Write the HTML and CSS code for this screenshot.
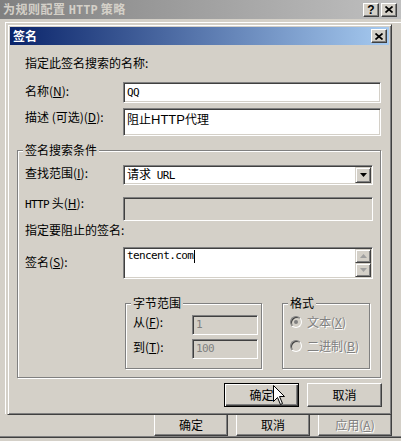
FILE: index.html
```html
<!DOCTYPE html>
<html>
<head>
<meta charset="utf-8">
<link rel="stylesheet" href="styles.css">
</head>
<body>
<div class="back">
  <div class="back-title">
    <span class="back-title-text">为规则配置 <span class="mono">HTTP</span> 策略</span>
    <div class="caption-btns">
      <span class="cap-btn help">?</span>
      <span class="cap-btn"><svg width="8" height="7" viewBox="0 0 8 7"><path d="M0.5 0.5 L7.5 6.5 M7.5 0.5 L0.5 6.5" stroke="#000" stroke-width="1.7"/></svg></span>
    </div>
  </div>
  <div class="back-panel"></div>
  <div class="back-buttons">
    <div class="btn small">确定</div>
    <div class="btn small">取消</div>
    <div class="btn small disabled">应用(<u>A</u>)</div>
  </div>
  <div class="back-edge"></div>
</div>

<div class="dlg">
  <div class="dlg-title">
    <span>签名</span>
    <span class="cap-btn"><svg width="8" height="7" viewBox="0 0 8 7"><path d="M0.5 0.5 L7.5 6.5 M7.5 0.5 L0.5 6.5" stroke="#000" stroke-width="1.7"/></svg></span>
  </div>
  <div class="dlg-body">
    <div class="heading">指定此签名搜索的名称:</div>
    <div class="row row-name">
      <div class="lbl">名称(<u>N</u>):</div>
      <div class="inp field h21"><span class="mono">QQ</span></div>
    </div>
    <div class="row row-desc">
      <div class="lbl">描述 (可选)(<u>D</u>):</div>
      <div class="inp field h28 top"><span class="prop">阻止<span class="latin">HTTP</span>代理</span></div>
    </div>

    <fieldset class="group main-group">
      <legend>签名搜索条件</legend>
      <div class="grow row-find">
        <div class="lbl l1">查找范围(<u>I</u>):</div>
        <div class="inp field h20 select">
          <span class="sel-text">请求 <span class="mono gap">URL</span></span>
          <span class="drop-btn"><svg width="7" height="4" viewBox="0 0 7 4"><path d="M0 0 H7 L3.5 4 Z" fill="#000"/></svg></span>
        </div>
      </div>
      <div class="grow row-http">
        <div class="lbl lm1"><span class="mono">HTTP</span> 头(<u>H</u>):</div>
        <div class="inp field h24 disabled"></div>
      </div>
      <div class="sub-heading">指定要阻止的签名:</div>
      <div class="grow row-sig">
        <div class="lbl l8">签名(<u>S</u>):</div>
        <div class="inp field h32 textarea">
          <span class="sig-text"><span class="mono">tencent.com</span><span class="caret"></span></span>
          <span class="scroll">
            <span class="sbtn"><svg width="7" height="4" viewBox="0 0 7 4"><path d="M0 4 H7 L3.5 0 Z" fill="#a0a0a0"/></svg></span>
            <span class="sbtn"><svg width="7" height="4" viewBox="0 0 7 4"><path d="M0 0 H7 L3.5 4 Z" fill="#a0a0a0"/></svg></span>
          </span>
        </div>
      </div>

      <div class="sub-groups">
        <fieldset class="group range">
          <legend>字节范围</legend>
          <div class="rrow r1">
            <div class="rlbl">从(<u>F</u>):</div>
            <div class="inp disabled rinp"><span class="mono">1</span></div>
          </div>
          <div class="rrow r2">
            <div class="rlbl">到(<u>T</u>):</div>
            <div class="inp disabled rinp"><span class="mono">100</span></div>
          </div>
        </fieldset>
        <fieldset class="group fmt">
          <legend>格式</legend>
          <div class="radio-row rr1"><span class="radio checked"></span><span class="dis-text">文本(<u>X</u>)</span></div>
          <div class="radio-row rr2"><span class="radio"></span><span class="dis-text">二进制(<u>B</u>)</span></div>
        </fieldset>
      </div>
    </fieldset>

    <div class="dlg-buttons">
      <div class="btn default">确定</div>
      <div class="btn">取消</div>
    </div>
  </div>
</div>

<svg class="cursor" width="13" height="21" viewBox="0 0 13 21"><path d="M0.5 0.5 V16.5 L4.5 12.5 L7.5 19.5 L9.5 18.5 L6.5 11.5 H11.5 Z" fill="#fff" stroke="#000" stroke-width="1"/></svg>
</body>
</html>
```

FILE: styles.css
```css
* { box-sizing: border-box; margin: 0; padding: 0; }
html, body { width: 401px; height: 441px; overflow: hidden; }
body {
  background: #d4d0c8;
  font-family: "Noto Sans CJK SC", "Liberation Sans", sans-serif;
  font-size: 12px;
  line-height: 14px;
  color: #000;
  position: relative;
}
u { text-decoration: underline; text-underline-offset: 1px; }
.mono { font-family: "DejaVu Sans Mono", monospace; font-size: 11px; letter-spacing: -0.6px; }
.mono.gap { margin-left: 3px; }
.latin { font-family: "Liberation Sans", sans-serif; font-size: 13px; }

/* back window */
.back { display: flex; flex-direction: column; height: 441px; }
.back-title {
  height: 19px;
  background: linear-gradient(to right, #808080, #c0c0c0);
  display: flex; align-items: center; justify-content: space-between;
  padding: 0 4px 0 3px;
}
.back-title-text { color: #d4d0c8; font-weight: bold; letter-spacing: 0.5px; white-space: pre; }
.back-title-text .mono { font-size: 12px; letter-spacing: 0; }
.caption-btns { display: flex; gap: 2px; }
.cap-btn {
  width: 16px; height: 14px;
  display: flex; align-items: center; justify-content: center;
  background: #d4d0c8;
  border: 1px solid; border-color: #fff #404040 #404040 #fff;
  box-shadow: inset -1px -1px #808080;
}
.cap-btn.help { font-family: "Liberation Sans", sans-serif; font-weight: bold; font-size: 12px; line-height: 12px; color: #000; }
.back-panel { flex: 1; margin: 3px 0 0 5px; border-left: 1px solid #fff; border-top: 1px solid #fff; }
.back-buttons { display: flex; justify-content: flex-end; gap: 8px; padding-right: 9px; height: 22px; }
.back-edge { height: 5px; border-top: 1px solid #808080; box-shadow: inset 0 1px #404040; }

/* buttons */
.btn {
  display: flex; align-items: center; justify-content: center;
  width: 75px; height: 24px;
  background: #d4d0c8;
  border: 1px solid; border-color: #fff #404040 #404040 #fff;
  box-shadow: inset -1px -1px #808080, inset 1px 1px #d4d0c8;
}
.btn.small { width: 74px; height: 22px; }
.btn.default {
  border-color: #000;
  box-shadow: inset 1px 1px #fff, inset -1px -1px #404040, inset -2px -2px #808080;
}
.btn.disabled, .dis-text { color: #808080; text-shadow: 1px 1px #fff; }

/* front dialog */
.dlg {
  position: absolute; left: 7px; top: 24px;
  width: 385px; height: 391px;
  background: #d4d0c8;
  border: 1px solid; border-color: #d4d0c8 #404040 #404040 #d4d0c8;
  box-shadow: inset 1px 1px #fff, inset -1px -1px #808080;
  padding: 2px;
}
.dlg-title {
  height: 18px;
  background: linear-gradient(to right, #0a246a, #a6caf0);
  display: flex; align-items: center; justify-content: space-between;
  padding: 0 2px 0 3px;
  color: #fff; font-weight: bold;
}
.dlg-body { padding: 0 8px 0 7px; }
.heading { margin-top: 11px; padding-left: 8px; }
.row { display: flex; align-items: flex-start; padding-left: 8px; }
.grow { display: flex; align-items: flex-start; }
.lbl { width: 98px; flex: none; margin-top: 2px; white-space: pre; }
.field { flex: 1; }
.row-name { margin-top: 12px; }
.row-desc { margin-top: 5px; }

.inp {
  background: #fff;
  border: 1px solid; border-color: #808080 #fff #fff #808080;
  box-shadow: inset 1px 1px #404040, inset -1px -1px #d4d0c8;
  padding: 0 3px;
  display: flex; align-items: center;
  position: relative;
}
.inp.top { align-items: flex-start; padding-top: 3px; }
.inp.disabled { background: #d4d0c8; color: #808080; }
.h20 { height: 20px; }
.h21 { height: 21px; }
.h24 { height: 24px; }
.h28 { height: 28px; }
.h32 { height: 32px; }

/* group boxes */
.group {
  border: 1px solid #808080;
  box-shadow: inset 1px 1px #fff, 1px 1px #fff;
}
.group legend { background: #d4d0c8; padding: 0 2px; margin-left: -2px; line-height: 14px; }
.main-group { margin-top: 7px; padding: 0 7px 8px 7px; }
.row-find { margin-top: 8px; }
.l1 { margin-top: 1px; }
.row-http { margin-top: 12px; }
.lm1 { margin-top: -1px; }
.sub-heading { margin-top: 2px; }
.row-sig { margin-top: 10px; }
.l8 { margin-top: 8px; }

.select { justify-content: space-between; padding-right: 1px; }
.drop-btn, .sbtn {
  width: 16px;
  display: flex; align-items: center; justify-content: center;
  background: #d4d0c8;
  border: 1px solid; border-color: #d4d0c8 #404040 #404040 #d4d0c8;
  box-shadow: inset 1px 1px #fff, inset -1px -1px #808080;
}
.drop-btn { height: 16px; }
.textarea { align-items: flex-start; justify-content: space-between; padding: 1px 1px 0 3px; }
.sig-text { display: flex; align-items: center; }
.caret { width: 1px; height: 13px; background: #000; margin-left: 1px; }
.scroll { display: flex; flex-direction: column; }
.sbtn { height: 14px; }

.sub-groups { display: flex; gap: 20px; margin-top: 17px; padding-left: 100px; }
.range { width: 137px; height: 73px; padding: 0 3px 0 7px; }
.fmt { width: 88px; height: 73px; padding: 0 3px 0 7px; }
.rrow { display: flex; align-items: flex-start; }
.r1 { margin-top: 5px; }
.r2 { margin-top: 4px; }
.rlbl { width: 59px; flex: none; margin-top: 0; }
.r2 .rlbl { margin-top: 1px; }
.rinp { width: 66px; height: 20px; }

.radio-row { display: flex; align-items: center; gap: 5px; height: 14px; }
.rr1 { margin-top: 5px; }
.rr2 { margin-top: 10px; }
.radio {
  width: 12px; height: 12px; border-radius: 50%; flex: none;
  border: 1px solid; border-color: #808080 #fff #fff #808080;
  box-shadow: inset 1px 1px #404040;
  background: #d4d0c8;
  display: flex; align-items: center; justify-content: center;
}
.radio.checked::after { content: ""; width: 4px; height: 4px; border-radius: 50%; background: #808080; }

.dlg-buttons { display: flex; justify-content: flex-end; gap: 8px; margin: 5px -1px 0 0; }

.cursor { position: absolute; left: 273px; top: 385px; }
```
